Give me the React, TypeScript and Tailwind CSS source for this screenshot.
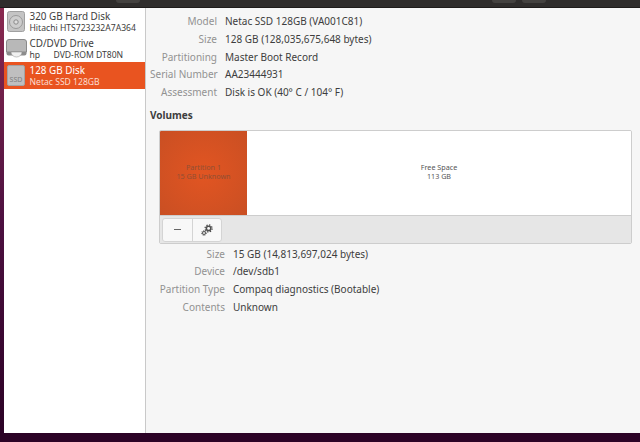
const font = "font-['Noto_Sans','Open_Sans','Liberation_Sans',sans-serif]";

function Row({ label, value, w }: { label: string; value: string; w: string }) {
  return (
    <div className="flex h-[17.7px] items-center text-[10px] leading-[17px]">
      <span className={`${w} shrink-0 whitespace-nowrap pr-[8px] text-right text-[#929292]`}>{label}</span>
      <span className="whitespace-nowrap text-[#3d3d3d]">{value}</span>
    </div>
  );
}

function HardDiskIcon() {
  return (
    <svg width="18" height="21" viewBox="0 0 18 21">
      <rect x="0.5" y="0.5" width="17" height="20" rx="2" fill="#c4c4c4" stroke="#a0a0a0" />
      <circle cx="9" cy="11" r="6.5" fill="#cdcdcd" stroke="#9a9a9a" />
      <circle cx="9" cy="11" r="2.2" fill="#dedede" stroke="#8a8a8a" />
    </svg>
  );
}

function DriveIcon() {
  return (
    <svg width="21" height="19" viewBox="0 0 21 19">
      <path d="M3 .5h15a2.5 2.5 0 0 1 2.5 2.5v10H.5V3A2.5 2.5 0 0 1 3 .5z" fill="#b8b8b8" stroke="#8a8a8a" />
      <path d="M.5 13h20v1.5a2 2 0 0 1-2 2h-16a2 2 0 0 1-2-2z" fill="#8c8c8c" />
      <path d="M5 13a5.5 5 0 0 0 11 0z" fill="#f0f0f0" stroke="#8a8a8a" strokeWidth="0.5" />
    </svg>
  );
}

function SsdIcon() {
  return (
    <div className="flex h-[21px] w-[18px] items-end justify-center rounded-[2px] border border-[#a3a3a3] bg-[#bfbfbf]">
      <span className="text-[7px] leading-[10px] text-[#808080]">SSD</span>
    </div>
  );
}

function GearsIcon() {
  return (
    <svg width="12" height="12" viewBox="0 0 12 12" fill="none" stroke="#4f4f4f">
      <circle cx="7.6" cy="4.4" r="2.2" strokeWidth="1.5" />
      <circle cx="7.6" cy="4.4" r="3.5" strokeWidth="1.3" strokeDasharray="1.4 1.35" />
      <circle cx="3" cy="9" r="1.5" strokeWidth="1" />
      <circle cx="3" cy="9" r="2.4" strokeWidth="0.9" strokeDasharray="1 0.9" />
    </svg>
  );
}

function DiskItem({
  icon,
  title,
  sub,
  active,
}: {
  icon: React.ReactNode;
  title: string;
  sub: string;
  active?: boolean;
}) {
  return (
    <div className={`flex h-[27px] items-center ${active ? "bg-[#e95420] text-white" : "text-[#3d3d3d]"}`}>
      <div className="flex w-[24px] shrink-0 justify-center">{icon}</div>
      <div className="min-w-0 pl-[1.5px]">
        <div className="whitespace-pre text-[9.9px] leading-[13px]">{title}</div>
        <div className={`whitespace-pre text-[8.6px] leading-[11px] ${active ? "text-[#fbdccf]" : ""}`}>{sub}</div>
      </div>
    </div>
  );
}

export default function App() {
  return (
    <div className={`flex h-[442px] w-[640px] flex-col overflow-hidden bg-[#2c0326] ${font}`}>
      <div className="flex h-[8px] shrink-0 overflow-hidden border-b border-[#1e1c1b] bg-[#2f2d2c] pl-[116px]">
        <div className="h-[3px] w-[24px] shrink-0 rounded-b-[3px] bg-[#444240]" />
        <div className="w-[352px] shrink-0 pl-[235px]">
          <div className="-mt-[9px] text-[9px] leading-[12px] text-[#9a9897]">/dev/sdb</div>
        </div>
        <div className="h-[3px] w-[24px] shrink-0 rounded-b-[3px] bg-[#444240]" />
        <div className="ml-[6px] h-[3px] w-[24px] shrink-0 rounded-b-[3px] bg-[#444240]" />
      </div>
      <div className="flex h-[425px] shrink-0 bg-gradient-to-b from-[#8a2a50] via-[#4d1040] to-[#2c0326] pl-[4px]">
        <div className="h-full w-[142px] shrink-0 border-r border-[#c9c9c9] bg-white">
          <DiskItem icon={<HardDiskIcon />} title="320 GB Hard Disk" sub="Hitachi HTS723232A7A364" />
          <DiskItem icon={<DriveIcon />} title="CD/DVD Drive" sub="hp      DVD-ROM DT80N" />
          <DiskItem icon={<SsdIcon />} title="128 GB Disk" sub="Netac SSD 128GB" active />
        </div>
        <div className="flex min-w-0 flex-1 flex-col bg-[#f6f6f6] pl-[4px] pr-[7px] pt-[5px]">
          <Row w="w-[75px]" label="Model" value="Netac SSD 128GB (VA001C81)" />
          <Row w="w-[75px]" label="Size" value="128 GB (128,035,675,648 bytes)" />
          <Row w="w-[75px]" label="Partitioning" value="Master Boot Record" />
          <Row w="w-[75px]" label="Serial Number" value="AA23444931" />
          <Row w="w-[75px]" label="Assessment" value="Disk is OK (40° C / 104° F)" />
          <div className="mt-[5px] text-[10px] font-bold leading-[18px] text-[#3d3d3d]">Volumes</div>
          <div className="ml-[9px] mt-[5.5px] flex h-[114.5px] w-[473px] shrink-0 flex-col overflow-hidden rounded-[2px] border border-[#cdcdcd]">
            <div className="flex h-[84px] shrink-0 bg-white">
              <div className="flex w-[87px] shrink-0 flex-col items-center justify-center bg-[radial-gradient(circle,#e25522,#c94f23)] pb-[2px] text-[7.2px] leading-[9px] text-[#914f33]">
                <span>Partition 1</span>
                <span>15 GB Unknown</span>
              </div>
              <div className="flex flex-1 flex-col items-center justify-center pb-[2px] text-[7.2px] leading-[9px] text-[#555]">
                <span>Free Space</span>
                <span>113 GB</span>
              </div>
            </div>
            <div className="flex flex-1 items-center border-t border-[#cdcdcd] bg-[#e6e6e6] pl-[2px]">
              <div className="flex h-[24px] overflow-hidden rounded-[3px] border border-[#d4d4d4] bg-[#f8f8f8]">
                <div className="flex w-[30px] items-center justify-center border-r border-[#d4d4d4]">
                  <span className="h-px w-[7px] bg-[#666]" />
                </div>
                <div className="flex w-[28px] items-center justify-center">
                  <GearsIcon />
                </div>
              </div>
            </div>
          </div>
          <div className="mt-[1px]">
            <Row w="w-[83px]" label="Size" value="15 GB (14,813,697,024 bytes)" />
            <Row w="w-[83px]" label="Device" value="/dev/sdb1" />
            <Row w="w-[83px]" label="Partition Type" value="Compaq diagnostics (Bootable)" />
            <Row w="w-[83px]" label="Contents" value="Unknown" />
          </div>
        </div>
      </div>
    </div>
  );
}
